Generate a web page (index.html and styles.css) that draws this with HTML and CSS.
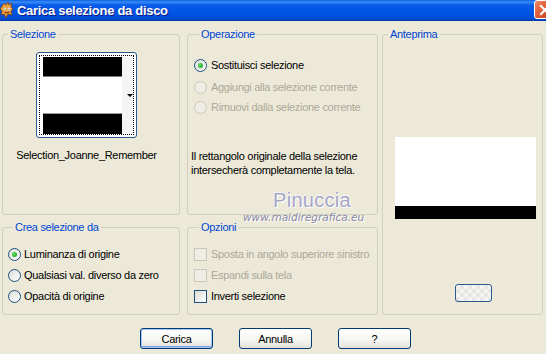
FILE: index.html
```html
<!DOCTYPE html>
<html lang="it">
<head>
    <meta charset="UTF-8">
    <title>Carica selezione da disco</title>
    <link rel="stylesheet" href="styles.css">
</head>
<body>
    <div class="window">
        <div class="titlebar">
            <svg class="app-icon" width="14" height="17" viewBox="0 0 14 17">
                <path d="M2 4 L4 1 L6 3 L8 0 L9 3 L12 1 L11 5 L13 7 L11 9 L12 13 L8 12 L6 16 L4 12 L1 13 L2 9 L0 7 Z" fill="#e8a040" stroke="#7a3a10" stroke-width="0.8"/>
                <circle cx="5" cy="7" r="1.3" fill="#fff"/>
                <circle cx="9" cy="7" r="1.3" fill="#fff"/>
                <circle cx="5" cy="7" r="0.6" fill="#222"/>
                <circle cx="9" cy="7" r="0.6" fill="#222"/>
                <path d="M4.5 10 Q7 12 9.5 10" stroke="#7a1a10" stroke-width="1" fill="none"/>
            </svg>
            <span class="title">Carica selezione da disco</span>
            <div class="close-btn">
                <svg width="14" height="14" viewBox="0 0 14 14">
                    <path d="M3 3 L11 11 M11 3 L3 11" stroke="#fff" stroke-width="2.2" stroke-linecap="square"/>
                </svg>
            </div>
        </div>

        <div class="panes">
            <!-- Selezione -->
            <fieldset class="group group-sel">
                <legend>Selezione</legend>
                <div class="thumb">
                    <div class="thumb-focus">
                        <div class="thumb-img">
                            <div class="band"></div>
                            <div class="gap"></div>
                            <div class="band"></div>
                        </div>
                        <div class="thumb-side"><span class="arrow"></span></div>
                    </div>
                </div>
                <div class="thumb-name">Selection_Joanne_Remember</div>
            </fieldset>

            <!-- Operazione -->
            <fieldset class="group group-op">
                <legend>Operazione</legend>
                <div class="options">
                    <label class="opt"><span class="radio checked"></span>Sostituisci selezione</label>
                    <label class="opt disabled"><span class="radio"></span>Aggiungi alla selezione corrente</label>
                    <label class="opt disabled"><span class="radio"></span>Rimuovi dalla selezione corrente</label>
                </div>
                <p class="note">Il rettangolo originale della selezione<br>intersecherà completamente la tela.</p>
            </fieldset>

            <!-- Anteprima -->
            <fieldset class="group group-prev">
                <legend>Anteprima</legend>
                <div class="preview">
                    <div class="preview-band"></div>
                </div>
                <div class="mini-btn"></div>
            </fieldset>

            <!-- Crea selezione da -->
            <fieldset class="group group-crea">
                <legend>Crea selezione da</legend>
                <div class="options">
                    <label class="opt"><span class="radio checked"></span>Luminanza di origine</label>
                    <label class="opt"><span class="radio"></span>Qualsiasi val. diverso da zero</label>
                    <label class="opt"><span class="radio"></span>Opacità di origine</label>
                </div>
            </fieldset>

            <!-- Opzioni -->
            <fieldset class="group group-opts">
                <legend>Opzioni</legend>
                <div class="options">
                    <label class="opt disabled"><span class="check"></span>Sposta in angolo superiore sinistro</label>
                    <label class="opt disabled"><span class="check"></span>Espandi sulla tela</label>
                    <label class="opt"><span class="check"></span>Inverti selezione</label>
                </div>
            </fieldset>
        </div>

        <div class="buttons">
            <button class="btn default">Carica</button>
            <button class="btn">Annulla</button>
            <button class="btn">?</button>
        </div>

        <div class="watermark">
            <div class="wm-name">Pinuccia</div>
            <div class="wm-url">www.maidiregrafica.eu</div>
        </div>
    </div>
</body>
</html>
```

FILE: styles.css
```css
* {
    margin: 0;
    padding: 0;
    box-sizing: border-box;
}

body {
    font-family: 'Liberation Sans', Arial, sans-serif;
    font-size: 11px;
    letter-spacing: -0.3px;
    background: #ece9d8;
    color: #000000;
    width: 546px;
    height: 354px;
    overflow: hidden;
}

.window {
    position: relative;
    width: 546px;
    height: 354px;
    background: #ece9d8;
}

/* Title bar */
.titlebar {
    height: 21px;
    display: flex;
    align-items: center;
    background: linear-gradient(to bottom, #0a5fe0 0%, #3a8cf8 10%, #0a5ce8 25%, #0055e5 60%, #0050dc 85%, #0046c8 100%);
    border-bottom: 1px solid #003cb0;
}

.app-icon {
    margin-top: 1px;
}

.title {
    margin-left: 3px;
    color: #ffffff;
    font-weight: bold;
    font-size: 13px;
    letter-spacing: -0.3px;
    text-shadow: 1px 1px 0 #0a1c84;
}

.close-btn {
    margin-left: auto;
    margin-right: -10px;
    width: 22px;
    height: 19px;
    margin-top: -1px;
    border: 1px solid #ffffff;
    border-radius: 3px;
    background: linear-gradient(135deg, #f08a6a 0%, #e05a32 45%, #c83c18 100%);
    display: flex;
    align-items: center;
    padding-left: 3px;
}

/* Panes */
.panes {
    display: grid;
    grid-template-columns: 178px 7px 191px 4px 161px;
    grid-template-rows: 187px 94px;
    row-gap: 6px;
    padding: 7px 0 0 2px;
}

.group {
    border: 1px solid #d0d0bf;
    border-radius: 3px;
    min-width: 0;
    padding: 0;
    display: flex;
    flex-direction: column;
}

.group legend {
    color: #0046d5;
    font-size: 11px;
    line-height: 13px;
    padding: 0 2px;
    margin-left: 5px;
}

.group-sel {
    grid-column: 1;
    grid-row: 1;
    align-items: center;
    padding-right: 9px;
}

.group-op {
    grid-column: 3;
    grid-row: 1;
    padding-left: 6px;
}

.group-prev {
    grid-column: 5;
    grid-row: 1 / 3;
}

.group-crea {
    grid-column: 1;
    grid-row: 2;
    padding-left: 5px;
}

.group-opts {
    grid-column: 3;
    grid-row: 2;
    padding-left: 6px;
}

/* Thumbnail */
.thumb {
    margin-top: 11px;
    width: 101px;
    height: 86px;
    border: 1px solid #2c5a8c;
    border-radius: 3px;
    background: #ffffff;
    padding: 2px;
}

.thumb-focus {
    height: 100%;
    border: 1px dotted #000000;
    display: flex;
    padding: 1px 0 0 3px;
}

.thumb-img {
    width: 79px;
    display: flex;
    flex-direction: column;
}

.band {
    height: 20px;
    background: #000000;
    border-bottom: 1px solid #7a7a7a;
}

.band:last-child {
    border-bottom: none;
    border-top: 1px solid #9a9a9a;
    height: 21px;
}

.gap {
    flex: 1;
    background: #ffffff;
}

.thumb-side {
    flex: 1;
    background: #f4f4f4;
    position: relative;
}

.arrow {
    position: absolute;
    right: 0;
    top: 37px;
    width: 0;
    height: 0;
    border-left: 3px solid transparent;
    border-right: 3px solid transparent;
    border-top: 3px solid #000000;
}

.thumb-name {
    margin-top: 11px;
    line-height: 13px;
    font-size: 11px;
}

/* Radio and checkbox rows */
.options {
    display: flex;
    flex-direction: column;
    gap: 6px;
}

.group-op .options {
    margin-top: 16px;
}

.group-op .opt + .opt + .opt {
    margin-top: -2px;
}

.group-crea .options,
.group-opts .options {
    margin-top: 12px;
    gap: 5px;
}

.opt {
    display: flex;
    align-items: center;
    height: 16px;
    gap: 4px;
    white-space: nowrap;
}

.group-crea .opt {
    gap: 3px;
}

.opt.disabled {
    color: #aca899;
}

.radio {
    width: 13px;
    height: 13px;
    border-radius: 50%;
    border: 1px solid #1c5180;
    background: linear-gradient(135deg, #dcdcd7 0%, #ffffff 100%);
    display: flex;
    align-items: center;
    justify-content: center;
    flex-shrink: 0;
}

.radio.checked::after {
    content: "";
    width: 5px;
    height: 5px;
    border-radius: 50%;
    background: radial-gradient(circle at 40% 40%, #5ee65e 0%, #21a121 80%);
}

.check {
    width: 13px;
    height: 13px;
    border: 1px solid #1c5180;
    background: linear-gradient(135deg, #dcdcd7 0%, #ffffff 100%);
    flex-shrink: 0;
}

.opt.disabled .radio,
.opt.disabled .check {
    border-color: #cac8bb;
    background: #f0eee4;
}

.note {
    margin-top: 34px;
    line-height: 14px;
    margin-left: -3px;
}

/* Preview */
.preview {
    margin: 96px 0 0 12px;
    width: 141px;
    height: 82px;
    background: #ffffff;
    display: flex;
    flex-direction: column;
    justify-content: flex-end;
}

.preview-band {
    height: 13px;
    background: #000000;
}

.mini-btn {
    margin: 65px 0 0 72px;
    width: 37px;
    height: 18px;
    border: 1px solid #2c5a8c;
    border-radius: 3px;
    background-color: #f4f4f0;
    background-image:
        linear-gradient(45deg, #e6e6e6 25%, transparent 25%, transparent 75%, #e6e6e6 75%),
        linear-gradient(45deg, #e6e6e6 25%, transparent 25%, transparent 75%, #e6e6e6 75%);
    background-size: 8px 8px;
    background-position: 0 0, 4px 4px;
}

/* Dialog buttons */
.buttons {
    display: flex;
    gap: 26px;
    padding-left: 140px;
    margin-top: 13px;
}

.btn {
    width: 73px;
    height: 21px;
    border: 1px solid #003c74;
    border-radius: 3px;
    background: linear-gradient(to bottom, #ffffff 0%, #f4f4f0 60%, #e4e2d8 100%);
    font-family: 'Liberation Sans', Arial, sans-serif;
    font-size: 11px;
    letter-spacing: -0.3px;
    color: #000000;
}

.btn.default {
    box-shadow: inset 0 0 0 1px #a8c4f0, inset 0 -1px 0 1px #7ba2e7;
}

/* Watermark overlay */
.watermark {
    position: absolute;
    left: 243px;
    top: 189px;
    width: 124px;
    pointer-events: none;
    letter-spacing: 0;
}

.wm-name {
    font-family: 'Liberation Sans', Arial, sans-serif;
    font-size: 20px;
    line-height: 22px;
    letter-spacing: 0.3px;
    color: #a6a6c4;
    text-shadow: 1px 1px 0 #ffffff, -1px 0 0 #f4f4f8, 0 -1px 0 #f4f4f8;
    padding-left: 30px;
}

.wm-url {
    font-family: 'DejaVu Sans', sans-serif;
    font-size: 10.5px;
    line-height: 12px;
    color: #8a8aa8;
    font-style: italic;
    text-shadow: 1px 1px 0 #ffffff;
}
```
